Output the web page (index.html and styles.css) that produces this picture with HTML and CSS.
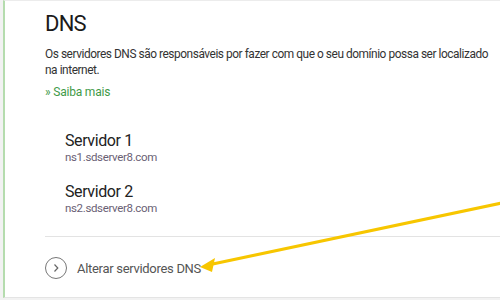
FILE: index.html
```html
<!DOCTYPE html>
<html lang="pt">
<head>
<meta charset="utf-8">
<link rel="stylesheet" href="styles.css">
</head>
<body>
<div class="frame">
  <div class="card">
    <h1 class="title">DNS</h1>
    <p class="desc">Os servidores DNS são responsáveis por fazer com que o seu domínio possa ser localizado na internet.</p>
    <a class="more">» Saiba mais</a>
    <div class="servers">
      <div class="server">
        <div class="server-name">Servidor 1</div>
        <div class="server-host">ns1.sdserver8.com</div>
      </div>
      <div class="server">
        <div class="server-name">Servidor 2</div>
        <div class="server-host">ns2.sdserver8.com</div>
      </div>
    </div>
    <div class="divider"></div>
    <div class="action">
      <span class="circle"><svg width="10" height="10" viewBox="0 0 10 10"><path d="M3.5 1.5 L6.8 5 L3.5 8.5" fill="none" stroke="#666" stroke-width="1.2"/></svg></span>
      <span class="action-text">Alterar servidores DNS</span>
    </div>
  </div>
</div>
<svg class="arrow" width="500" height="300" viewBox="0 0 500 300">
  <line x1="502" y1="203" x2="208" y2="265" stroke="#f7c600" stroke-width="3.2"/>
  <polygon points="200,267 215,258 212,272" fill="#f7c600"/>
</svg>
</body>
</html>
```
FILE: styles.css
```css
html, body {
  margin: 0;
  padding: 0;
  width: 500px;
  height: 300px;
  overflow: hidden;
}
body {
  font-family: Roboto, "Liberation Sans", sans-serif;
  position: relative;
  background: #f2f2f2;
}
.frame {
  margin-left: 3px;
  height: 298px;
  border-left: 2px solid #b5dcae;
  border-top: 1px solid #ececec;
  border-bottom: 1px solid #e4e4e4;
  background: #fff;
  box-sizing: border-box;
}
.card {
  padding: 9px 0 0 40px;
}
.title {
  margin: 0;
  font-size: 22px;
  font-weight: 400;
  letter-spacing: -0.8px;
  color: #1a1a1a;
  line-height: 28px;
}
.desc {
  margin: 9px 0 0;
  font-size: 11.9px;
  letter-spacing: -0.45px;
  line-height: 15.5px;
  color: #333;
  width: 452px;
}
.more {
  display: block;
  margin-top: 6px;
  font-size: 12px;
  letter-spacing: -0.2px;
  color: #3f9a48;
  line-height: 16px;
}
.servers {
  margin-top: 31px;
  padding-left: 20px;
  display: flex;
  flex-direction: column;
  gap: 17px;
}
.server-name {
  font-size: 16px;
  letter-spacing: -0.4px;
  line-height: 19px;
  color: #222;
}
.server-host {
  font-size: 11.5px;
  letter-spacing: -0.35px;
  line-height: 15px;
  color: #6a5f75;
}
.divider {
  margin-top: 20px;
  border-top: 1px solid #e3e3e3;
}
.action {
  display: flex;
  align-items: center;
  gap: 10px;
  margin-top: 20px;
}
.circle {
  width: 22px;
  height: 22px;
  border: 1px solid #777;
  border-radius: 50%;
  display: flex;
  align-items: center;
  justify-content: center;
  box-sizing: border-box;
}
.action-text {
  font-size: 13px;
  letter-spacing: -0.3px;
  color: #555;
}
.arrow {
  position: absolute;
  left: 0;
  top: 0;
  pointer-events: none;
}
```
